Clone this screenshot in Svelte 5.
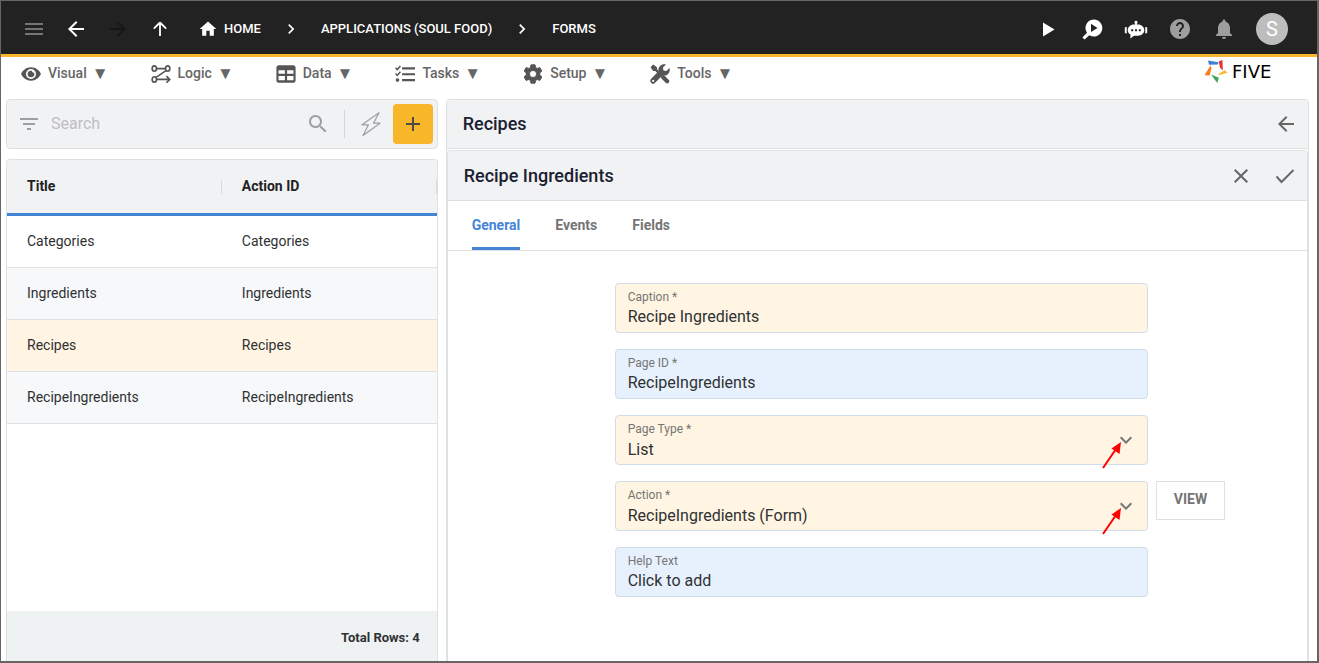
<script lang="ts">
  type Row = { title: string; actionId: string };

  const menus = ['Visual', 'Logic', 'Data', 'Tasks', 'Setup', 'Tools'];
  const tabs = ['General', 'Events', 'Fields'];
  const rows: Row[] = [
    { title: 'Categories', actionId: 'Categories' },
    { title: 'Ingredients', actionId: 'Ingredients' },
    { title: 'Recipes', actionId: 'Recipes' },
    { title: 'RecipeIngredients', actionId: 'RecipeIngredients' },
  ];

  let search = $state('');
  let selected = $state('Recipes');
  let activeTab = $state('General');

  let caption = $state('Recipe Ingredients');
  let pageId = $state('RecipeIngredients');
  let pageType = $state('List');
  let action = $state('RecipeIngredients (Form)');
  let helpText = $state('Click to add');

  let visibleRows = $derived(
    rows.filter((r) => r.title.toLowerCase().includes(search.toLowerCase()))
  );
</script>

{#snippet icon(name: string)}
  <svg class="icon" viewBox="0 0 24 24" aria-hidden="true">
    {#if name === 'menu'}
      <path d="M3 18h18v-2H3zm0-5h18v-2H3zm0-7v2h18V6z" />
    {:else if name === 'back'}
      <path d="M20 11H7.83l5.59-5.59L12 4l-8 8 8 8 1.41-1.41L7.83 13H20z" />
    {:else if name === 'forward'}
      <path d="M12 4l-1.41 1.41L16.17 11H4v2h12.17l-5.58 5.59L12 20l8-8z" />
    {:else if name === 'up'}
      <path d="M12 5.500l-6.200 6.200M12 5.500l6.200 6.200M12 5.500V19" fill="none" stroke="currentColor" stroke-width="1.800" />
    {:else if name === 'home'}
      <path d="M10 20v-6h4v6h5v-8h3L12 3 2 12h3v8z" />
    {:else if name === 'chevron'}
      <path d="M10 6L8.590 7.410 13.170 12l-4.580 4.590L10 18l6-6z" />
    {:else if name === 'play'}
      <path d="M7 5.500v14l11.500-7z" />
    {:else if name === 'inspect'}
      <path fill-rule="evenodd" d="M13.500 2.500a8.500 8.500 0 1 1-4.200 15.700L4.600 22.600 2.400 20.400 7 15.800A8.500 8.500 0 0 1 13.500 2.500zM11 6.800v8.200l6.500-4.100z" />
    {:else if name === 'robot'}
      <path fill-rule="evenodd" d="M12 3.800a1.600 1.600 0 0 1 .9 2.900V7.500H14c3.500 0 6.300 2.500 6.300 5.600s-2.700 5.600-6.300 5.600h-4l-3.800 2.800.4-3.800C4.800 16.700 3.700 15 3.700 13.100c0-3.100 2.800-5.600 6.300-5.600h1.100V6.700A1.600 1.600 0 0 1 12 3.800zM7.200 12.300v2h2v-2zm3.800 0v2h2v-2zm3.800 0v2h2v-2z" />
      <path d="M2.700 10v6.500H2c-.8 0-1.200-.6-1.200-1.200v-4c0-.8.6-1.300 1.200-1.300zM21.300 10v6.500h.7c.8 0 1.200-.6 1.200-1.200v-4c0-.8-.6-1.300-1.200-1.300z" />
    {:else if name === 'help'}
      <path d="M12 2C6.480 2 2 6.480 2 12s4.480 10 10 10 10-4.480 10-10S17.520 2 12 2m1 17h-2v-2h2zm2.070-7.750-.9.920C13.450 12.900 13 13.500 13 15h-2v-.5c0-1.100.45-2.100 1.170-2.830l1.240-1.260c.37-.36.59-.86.59-1.410 0-1.100-.9-2-2-2s-2 .9-2 2H8c0-2.210 1.790-4 4-4s4 1.790 4 4c0 .88-.36 1.680-.93 2.250" />
    {:else if name === 'bell'}
      <path d="M12 22c1.100 0 2-.9 2-2h-4c0 1.100.890 2 2 2m6-6v-5c0-3.070-1.640-5.640-4.500-6.320V4c0-.83-.67-1.500-1.500-1.500s-1.500.67-1.500 1.500v.68C7.630 5.360 6 7.920 6 11v5l-2 2v1h16v-1z" />
    {:else if name === 'Visual'}
      <path fill-rule="evenodd" d="M12 4C6.500 4 2 7.500.1 12 2 16.500 6.500 20 12 20s10-3.500 11.900-8C22 7.500 17.500 4 12 4zm0 2a6 6 0 1 1 0 12 6 6 0 0 1 0-12z" />
      <path d="M12 8a4 4 0 1 0 4 4c0-.5-.1-1-.3-1.500a2.100 2.100 0 0 1-2.600-2.300C12.700 8.100 12.400 8 12 8z" />
    {:else if name === 'Logic'}
      <g fill="none" stroke="currentColor" stroke-width="2">
        <ellipse cx="4" cy="5.500" rx="2.600" ry="3.200" />
        <ellipse cx="20" cy="5.500" rx="2.600" ry="3.200" />
        <ellipse cx="4" cy="18.500" rx="2.600" ry="3.200" />
        <path d="M6.600 5.500h10.800M18 8L6 16M6.600 18.500H22M18.500 14.500l4 4-4 4" />
      </g>
    {:else if name === 'Data'}
      <path fill-rule="evenodd" d="M3.500 1.500h17A3 3 0 0 1 23.500 4.500v15a3 3 0 0 1-3 3h-17a3 3 0 0 1-3-3v-15a3 3 0 0 1 3-3zM3 7.500v4.300h7.700V7.500zm10.300 0v4.300H21V7.500zM3 14.300v5.200h7.700v-5.200zm10.300 0v5.200H21v-5.200z" />
    {:else if name === 'Tasks'}
      <path d="M8.500 4H24v2.600H8.500zm0 7H24v2.600H8.500zm0 7H24v2.800H8.500z" />
      <path d="M.7 4.500l2 2.200 3.800-4.400M.7 11.500l2 2.200 3.800-4.400" fill="none" stroke="currentColor" stroke-width="1.800" />
      <circle cx="3" cy="19.300" r="2.200" />
    {:else if name === 'Setup'}
      <path fill-rule="evenodd" stroke="currentColor" stroke-width="1.200" stroke-linejoin="round" d="M9.600 1h4.800l.7 3.300 1.900 1.100 3.200-1.100 2.400 4.200-2.500 2.200v2.600l2.500 2.200-2.400 4.200-3.200-1.100-1.900 1.100-.7 3.300H9.600l-.7-3.300L7 18.600l-3.200 1.100-2.400-4.200 2.500-2.200v-2.600L1.400 8.500l2.400-4.200L7 5.400l1.900-1.100zM12 7.700a4.300 4.300 0 1 0 0 8.600 4.300 4.300 0 0 0 0-8.600z" />
    {:else if name === 'Tools'}
      <path d="M.6 3.800L3.800.6l4.600 3.200v2.500l4.500 4.400-2.100 2.100-4.500-4.400H3.800z" />
      <path d="M15.800 15.800l4.800 4.800" fill="none" stroke="currentColor" stroke-width="5" stroke-linecap="round" />
      <path fill-rule="evenodd" d="M23.400 4.900l-3.700 3.600-3.500-.7-.7-3.500L19.200.6C16.700-.1 13.900.4 12 2.300c-1.800 1.800-2.300 4.300-1.700 6.500L1.400 17.700a3.100 3.100 0 0 0 0 4.800 3.100 3.100 0 0 0 4.700 0l9.100-9c2.200.7 4.700.2 6.500-1.600 1.900-1.900 2.400-4.600 1.700-7zM3.800 19a1.300 1.300 0 1 1 0 2.600 1.300 1.300 0 0 1 0-2.600z" />
    {:else if name === 'filter'}
      <path d="M10 18h4v-2h-4zM3 6v2h18V6zm3 7h12v-2H6z" />
    {:else if name === 'search'}
      <path d="M15.500 14h-.79l-.28-.27C15.410 12.590 16 11.110 16 9.500 16 5.910 13.090 3 9.500 3S3 5.910 3 9.500 5.910 16 9.500 16c1.610 0 3.090-.59 4.230-1.570l.27.28v.79l5 4.990L20.490 19zm-6 0C7.010 14 5 11.990 5 9.500S7.010 5 9.500 5 14 7.010 14 9.500 11.990 14 9.500 14" />
    {:else if name === 'bolt'}
      <path d="M20 .8L3 12.800h6.500L4 23.500l17-12.300h-6.500z" fill="none" stroke="currentColor" stroke-width="1.200" stroke-linejoin="round" />
    {:else if name === 'plus'}
      <path d="M19 13h-6v6h-2v-6H5v-2h6V5h2v6h6z" />
    {:else if name === 'close'}
      <path d="M19 6.410 17.590 5 12 10.590 6.410 5 5 6.410 10.590 12 5 17.590 6.410 19 12 13.410 17.590 19 19 17.590 13.410 12z" />
    {:else if name === 'check'}
      <path d="M3.500 12.500l5 5.500L20.500 6" fill="none" stroke="currentColor" stroke-width="1.900" />
    {:else if name === 'expand'}
      <path d="M16.590 8.590 12 13.170 7.410 8.590 6 10l6 6 6-6z" />
    {/if}
  </svg>
{/snippet}

{#snippet pointer()}
  <svg class="pointer" viewBox="0 0 20 28" aria-hidden="true">
    <path d="M1 27L14 8" stroke="#f00" stroke-width="2" />
    <path d="M19 1L9.500 7.500 17.500 13z" fill="#f00" />
  </svg>
{/snippet}

<div class="app">
  <header class="topbar">
    <nav class="nav-buttons" aria-label="Navigation">
      <button class="icon-btn dim" aria-label="Menu">{@render icon('menu')}</button>
      <button class="icon-btn" aria-label="Back">{@render icon('back')}</button>
      <button class="icon-btn faint" aria-label="Forward" disabled>{@render icon('forward')}</button>
      <button class="icon-btn" aria-label="Up">{@render icon('up')}</button>
    </nav>
    <nav class="breadcrumb" aria-label="Breadcrumb">
      <a class="home" href="#home">{@render icon('home')}HOME</a>
      {@render icon('chevron')}
      <a href="#applications">APPLICATIONS (SOUL FOOD)</a>
      {@render icon('chevron')}
      <a href="#forms">FORMS</a>
    </nav>
    <div class="top-actions">
      <button class="icon-btn" aria-label="Run">{@render icon('play')}</button>
      <button class="icon-btn" aria-label="Inspect">{@render icon('inspect')}</button>
      <button class="icon-btn" aria-label="Assistant">{@render icon('robot')}</button>
      <button class="icon-btn grey" aria-label="Help">{@render icon('help')}</button>
      <button class="icon-btn grey" aria-label="Notifications">{@render icon('bell')}</button>
      <button class="avatar" aria-label="Account">S</button>
    </div>
  </header>

  <div class="menubar">
    <nav class="menus" aria-label="Tools">
      {#each menus as menu}
        <button class="menu">{@render icon(menu)}<span>{menu}</span><span class="caret">▼</span></button>
      {/each}
    </nav>
    <a class="logo" href="#five">
      <svg viewBox="0 0 24 24" aria-hidden="true">
        <path d="M4 1.500l10.500 1.800-.5 2.300-9 .2z" fill="#3d7fd9" />
        <path d="M14.800 2.300L18.500 1l.3 10.500-2.800-3z" fill="#e23434" />
        <path d="M23.500 13.700l-9.300 2.600 1.300-2.100 5.500-3z" fill="#f9b82a" />
        <path d="M7 15.500l7.800 3.300-1.500 5.200z" fill="#3aa655" />
        <path d="M6.500 6.500l1 2.500-1.800 7.500-5.200-.3z" fill="#fb7b24" />
      </svg>
      <span>FIVE</span>
    </a>
  </div>

  <main class="workspace">
    <section class="list-side">
      <div class="searchbar">
        <button class="icon-btn muted" aria-label="Filter">{@render icon('filter')}</button>
        <input type="text" aria-label="Search" placeholder="Search" bind:value={search} />
        <button class="icon-btn muted" aria-label="Run search">{@render icon('search')}</button>
        <span class="divider"></span>
        <button class="icon-btn muted" aria-label="Quick action">{@render icon('bolt')}</button>
        <button class="add" aria-label="Add">{@render icon('plus')}</button>
      </div>

      <div class="list-card">
        <table>
          <thead>
            <tr><th>Title</th><th>Action ID</th></tr>
          </thead>
          <tbody>
            {#each visibleRows as row}
              <tr class:selected={row.title === selected} onclick={() => (selected = row.title)}>
                <td>{row.title}</td>
                <td>{row.actionId}</td>
              </tr>
            {/each}
          </tbody>
        </table>
        <footer>Total Rows: {visibleRows.length}</footer>
      </div>
    </section>

    <section class="detail">
      <div class="detail-head">
        <h1>Recipes</h1>
        <button class="icon-btn" aria-label="Close Recipes">{@render icon('back')}</button>
      </div>

      <div class="sub-card">
        <div class="detail-head">
          <h2>Recipe Ingredients</h2>
          <button class="icon-btn" aria-label="Cancel">{@render icon('close')}</button>
          <button class="icon-btn" aria-label="Save">{@render icon('check')}</button>
        </div>

        <div class="tabs" role="tablist">
          {#each tabs as tab}
            <button role="tab" aria-selected={tab === activeTab} class:active={tab === activeTab} onclick={() => (activeTab = tab)}>
              {tab}
            </button>
          {/each}
        </div>

        <form onsubmit={(e) => e.preventDefault()}>
          <div class="field required">
            <label for="caption">Caption *</label>
            <input id="caption" type="text" bind:value={caption} />
          </div>
          <div class="field">
            <label for="page-id">Page ID *</label>
            <input id="page-id" type="text" bind:value={pageId} />
          </div>
          <div class="field required">
            <label for="page-type">Page Type *</label>
            <select id="page-type" bind:value={pageType}>
              <option>List</option>
            </select>
            <span class="expand">{@render icon('expand')}</span>
            {@render pointer()}
          </div>
          <div class="field required">
            <label for="action">Action *</label>
            <select id="action" bind:value={action}>
              <option>RecipeIngredients (Form)</option>
            </select>
            <span class="expand">{@render icon('expand')}</span>
            {@render pointer()}
          </div>
          <button class="view" type="button">VIEW</button>
          <div class="field">
            <label for="help-text">Help Text</label>
            <input id="help-text" type="text" bind:value={helpText} />
          </div>
        </form>
      </div>
    </section>
  </main>
</div>

<style>
  :global(body) {
    background: #fff;
  }

  .app,
  .app * {
    box-sizing: border-box;
  }

  .app {
    display: flex;
    flex-direction: column;
    min-height: 100vh;
    border: 1px solid #666;
    border-width: 1px 2px 2px 1px;
    font-family: Roboto, sans-serif;
    font-size: 14px;
    color: #2f3133;
  }

  button,
  input,
  select {
    font: inherit;
    color: inherit;
    border: none;
    background: none;
    padding: 0;
    margin: 0;
    outline: none;
  }

  button {
    cursor: pointer;
  }

  a {
    color: inherit;
    text-decoration: none;
  }

  .icon {
    display: block;
    flex-shrink: 0;
    width: 24px;
    height: 24px;
    fill: currentColor;
  }

  .icon-btn {
    flex-shrink: 0;
  }

  /* Top bar */
  .topbar {
    display: flex;
    align-items: center;
    height: 56px;
    padding: 2px 29px 0 21px;
    background: #222;
    border-bottom: 3px solid #f8b62a;
    color: #fff;
  }

  .nav-buttons {
    display: flex;
    gap: 18px;
  }

  .dim { color: #757575; }
  .faint { color: #171717; }
  .grey { color: #9e9e9e; }

  .breadcrumb {
    display: flex;
    align-items: center;
    gap: 20px;
    margin-left: 26px;
    font-weight: 500;
    font-size: 13px;
    line-height: 20px;
  }

  .breadcrumb .icon {
    width: 20px;
    height: 20px;
  }

  .home {
    display: flex;
    align-items: center;
    gap: 6px;
  }

  .top-actions {
    display: flex;
    align-items: center;
    gap: 20px;
    margin-left: auto;
  }

  .avatar {
    width: 32px;
    height: 32px;
    border-radius: 50%;
    background: #bdbdbd;
    font-size: 20px;
  }

  /* Menus */
  .menubar {
    display: flex;
    justify-content: space-between;
    align-items: flex-start;
    height: 42px;
    padding: 0 25px 0 20px;
  }

  .menus {
    display: flex;
    gap: 42px;
  }

  .menu {
    display: flex;
    align-items: center;
    gap: 7px;
    height: 33px;
    font-weight: 500;
    line-height: 16px;
    color: #666;
  }

  .menu span {
    padding-bottom: 2px;
  }

  .menu .caret {
    font-size: 17px;
    margin-left: -2px;
  }

  .menu .icon {
    width: 20px;
    height: 20px;
    color: #555;
  }

  .logo {
    display: flex;
    align-items: center;
    gap: 4px;
    width: 88px;
    height: 28px;
    font-family: "DejaVu Sans", sans-serif;
    font-size: 18px;
    color: #000;
  }

  .logo svg {
    width: 24px;
    height: 24px;
  }

  /* Workspace */
  .workspace {
    flex: 1;
    display: grid;
    grid-template-columns: 1fr 2fr;
    gap: 8px;
    padding: 0 8px 0 5px;
  }

  .list-side {
    display: flex;
    flex-direction: column;
    gap: 10px;
  }

  .searchbar {
    display: flex;
    align-items: center;
    height: 50px;
    padding: 0 4px 0 10px;
    border: 1px solid #dfe0e1;
    border-radius: 4px;
    background: #f1f2f4;
  }

  .searchbar input {
    flex: 1;
    min-width: 0;
    margin-left: 10px;
    padding-bottom: 2px;
    font-size: 16px;
  }

  .searchbar input::placeholder {
    color: #bdbfc1;
    opacity: 1;
  }

  .muted { color: #9aa0a6; }

  .divider {
    width: 1px;
    height: 28px;
    margin: 0 14px;
    background: #d3d5d7;
  }

  .add {
    display: grid;
    place-items: center;
    width: 40px;
    height: 40px;
    margin-left: 10px;
    border-radius: 4px;
    background: #f8b62a;
    color: #4f4a42;
  }

  .list-card {
    flex: 1;
    display: flex;
    flex-direction: column;
    border: 1px solid #dfe0e1;
    border-bottom: none;
    border-radius: 4px 4px 0 0;
    overflow: hidden;
  }

  table {
    width: 100%;
    table-layout: fixed;
    border-collapse: separate;
    border-spacing: 0;
  }

  th,
  td {
    padding: 0 20px 2px;
    text-align: left;
  }

  th {
    position: relative;
    height: 56px;
    background: #f1f2f4;
    border-bottom: 3px solid #4585d8;
    font-weight: 700;
    color: #222;
  }

  th::after {
    content: '';
    position: absolute;
    top: 20px;
    right: 0;
    width: 1px;
    height: 14px;
    background: #d8dadc;
  }

  td {
    height: 52px;
    border-bottom: 1px solid #e0e2e4;
  }

  tbody tr:nth-child(even) {
    background: #f7f8fa;
  }

  tbody tr.selected {
    background: #fff5e2;
  }

  footer {
    height: 50px;
    margin-top: auto;
    padding: 0 17px;
    background: #eef2f3;
    text-align: right;
    font-size: 13px;
    font-weight: 700;
    line-height: 54px;
  }

  /* Detail */
  .detail {
    display: flex;
    flex-direction: column;
    border: 1px solid #dfe0e1;
    border-bottom: none;
    border-radius: 4px 4px 0 0;
  }

  .detail-head {
    display: flex;
    align-items: center;
    gap: 20px;
    height: 49px;
    padding: 0 10px 0 16px;
    border-bottom: 1px solid #dfe0e1;
    background: #f1f2f4;
    color: #666;
  }

  .detail-head :is(h1, h2) {
    flex: 1;
    margin: 0;
    font-size: 18px;
    font-weight: 500;
    line-height: 20px;
    color: #1a2030;
  }

  .sub-card {
    flex: 1;
    margin-top: 1px;
    border: 1px solid #dfe0e1;
    border-width: 1px 1px 0;
    border-radius: 4px 4px 0 0;
  }

  .sub-card .detail-head {
    height: 50px;
    border-radius: 4px 4px 0 0;
  }

  .tabs {
    display: flex;
    gap: 35px;
    height: 50px;
    padding: 0 24px;
    border-bottom: 1px solid #dfe0e1;
  }

  .tabs button {
    padding-top: 1px;
    border-bottom: 3px solid transparent;
    font-weight: 700;
    color: #757575;
  }

  .tabs button.active {
    color: #4585d8;
    border-bottom-color: #4585d8;
    border-radius: 2px 2px 0 0;
  }

  form {
    display: grid;
    grid-template-columns: 159px 1fr 159px;
    row-gap: 16px;
    padding: 32px 0 16px 8px;
  }

  .field {
    grid-column: 2;
    position: relative;
    height: 50px;
    border: 1px solid #cfdcea;
    border-radius: 4px;
    background: #e7f1fd;
  }

  .field.required {
    background: #fff5e2;
  }

  .field label {
    display: block;
    padding: 5px 12px 0;
    font-size: 12px;
    line-height: 16px;
    color: #757575;
  }

  .field input,
  .field select {
    display: block;
    width: 100%;
    height: 24px;
    padding: 0 12px;
    font-size: 16px;
    appearance: none;
  }

  .field input {
    height: 22px;
  }

  .expand {
    position: absolute;
    top: 12px;
    right: 9px;
    color: #757575;
    pointer-events: none;
  }

  .pointer {
    position: absolute;
    top: 25px;
    right: 25px;
    width: 20px;
    height: 28px;
    pointer-events: none;
  }

  .view {
    grid-column: 3;
    justify-self: start;
    width: 69px;
    height: 39px;
    margin-left: 8px;
    padding-bottom: 3px;
    border: 1px solid #dfe0e1;
    font-weight: 700;
    color: #757575;
  }
</style>
